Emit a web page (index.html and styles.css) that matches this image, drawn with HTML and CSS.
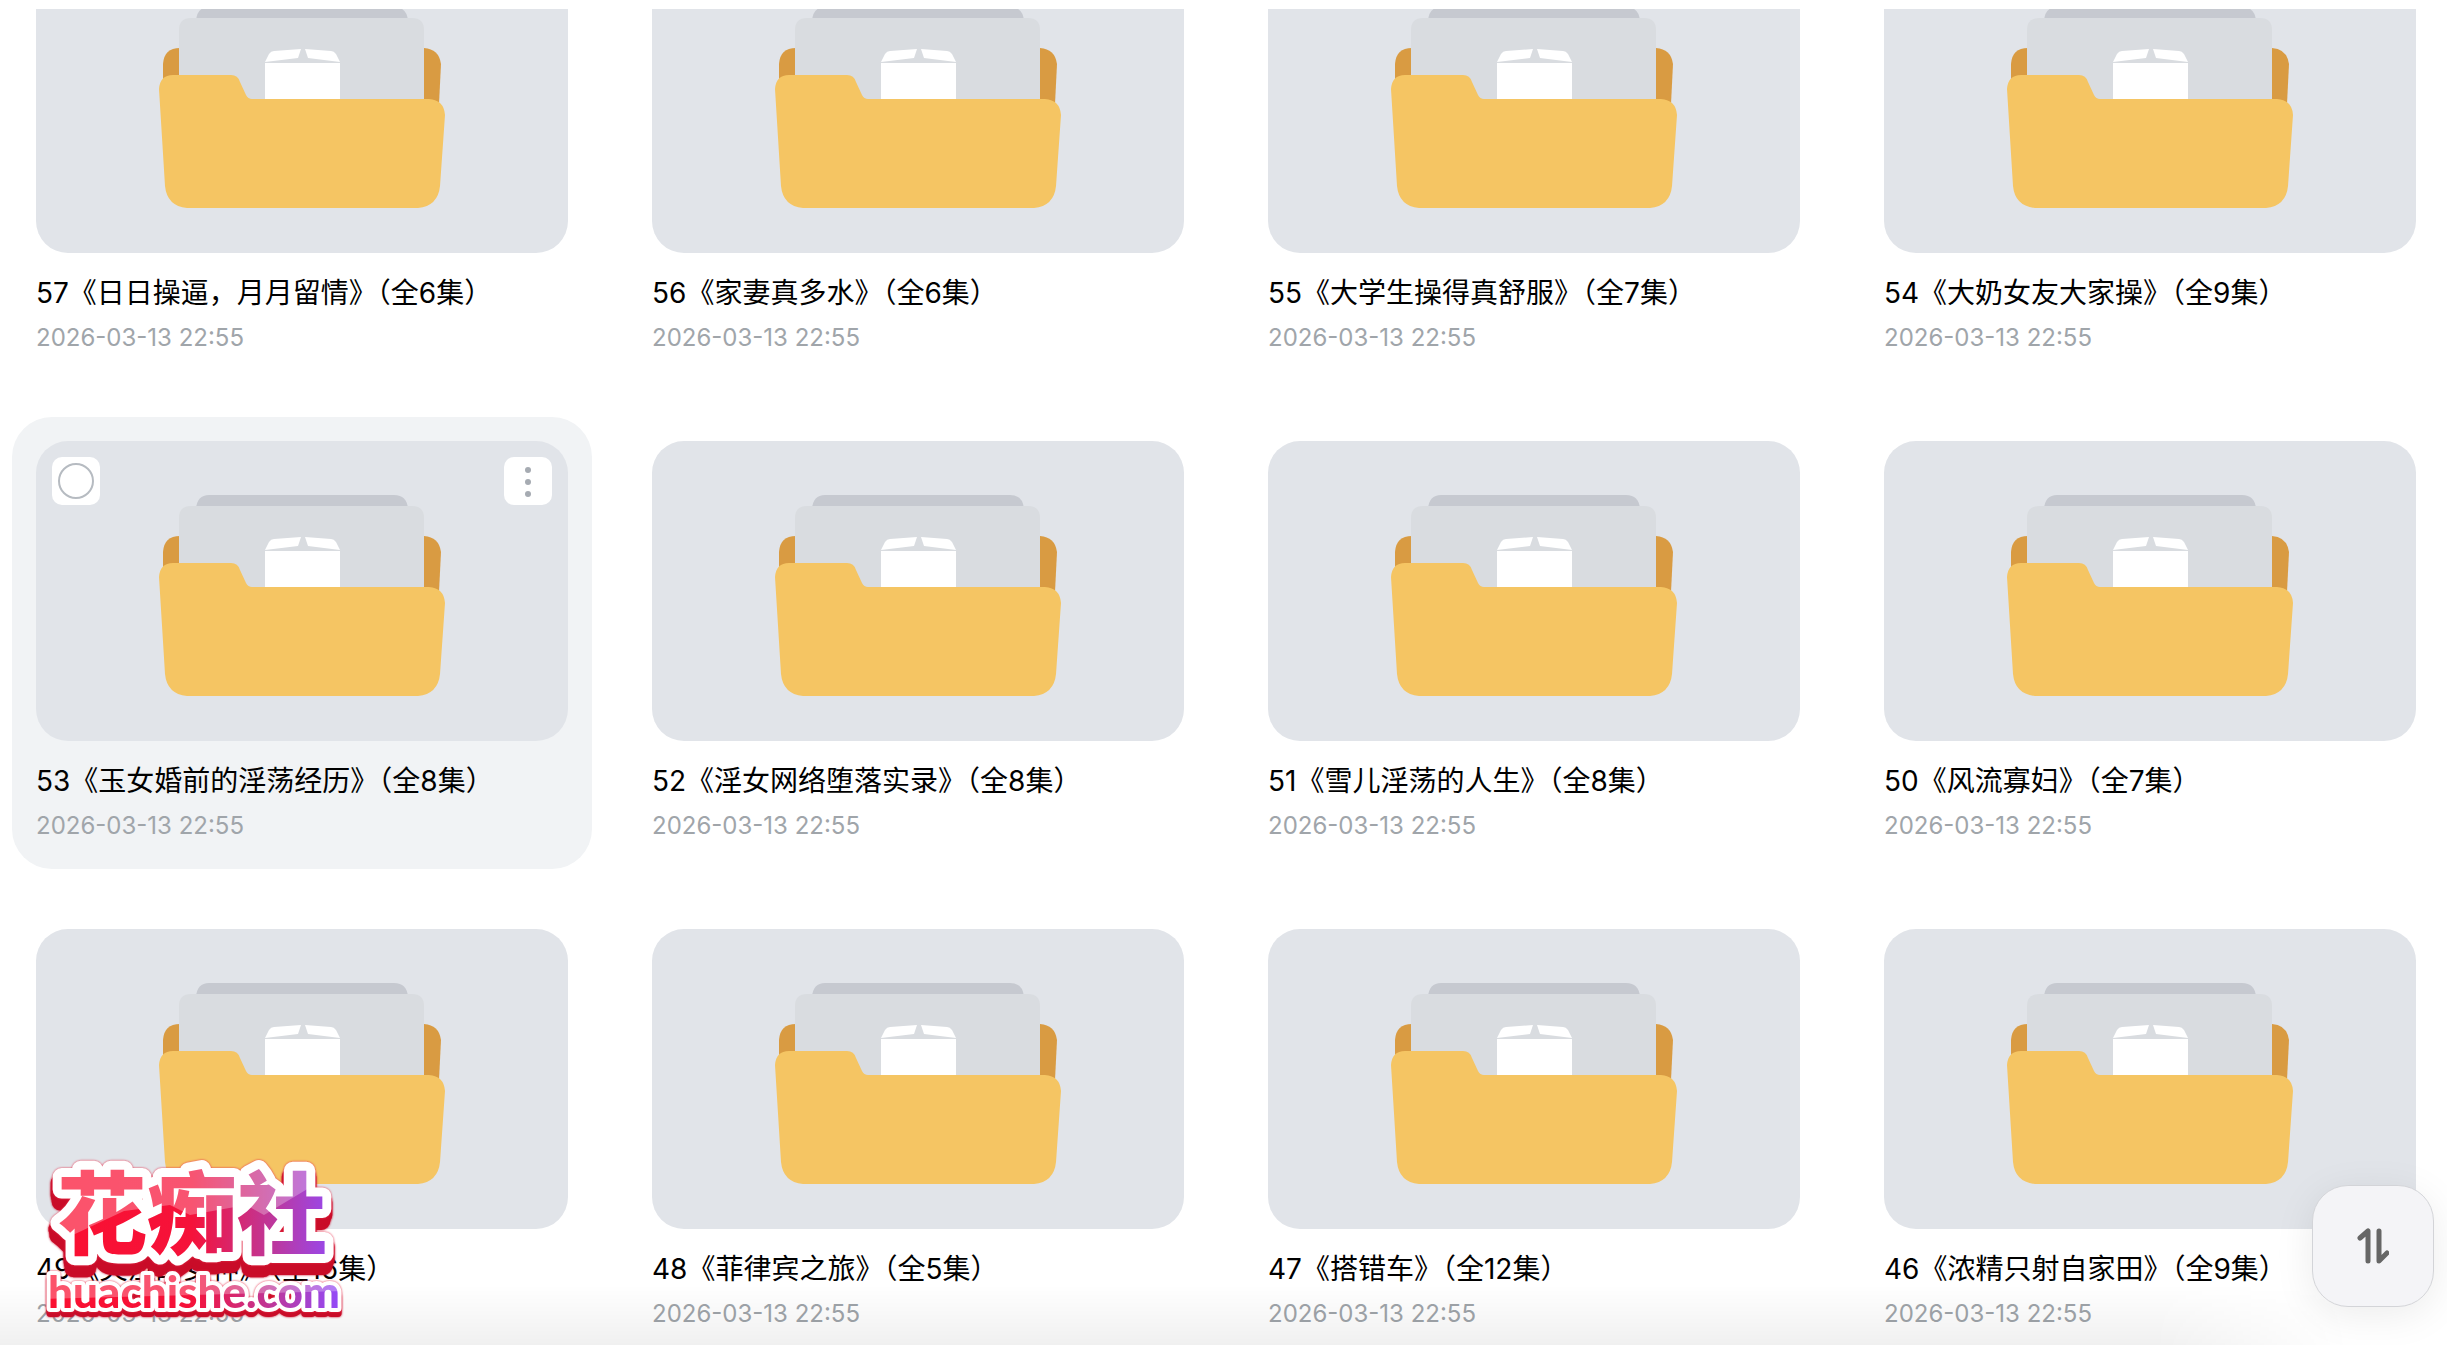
FILE: index.html
```html
<!DOCTYPE html>
<html lang="zh-CN">
<head>
<meta charset="UTF-8">
<title>文件列表</title>
<link rel="stylesheet" href="styles.css">
</head>
<body>
  <!-- 公用的文件夹图标 -->
  <svg class="sprite" aria-hidden="true">
    <symbol id="folder" viewBox="0 0 286 202">
      <path fill="#d99b42" d="M4 70V57q1-16 17-16H265q15 1 17 16l-3 60H7z"/>
      <path fill="#c6c9d0" d="M37 14Q38 0 50 0H235q13 0 14 14z"/>
      <path fill="#d9dce0" d="M20 120V23Q20 11 32 11H253q12 0 12 12v97z"/>
      <path fill="#fff" d="M106 56h75v45h-75z"/>
      <path fill="#fff" d="M106 55l4-8q2-3 5-3l27-2-3 9zM181 55l-4-8q-2-3-5-3l-26-2 3 9z"/>
      <path fill="#f5c563" d="M0 82Q1 68 14 68H72q7 0 9 7l6 13q2 4 6 4H270q15 1 16 16l-5 71q-2 20-22 22H28Q8 199 6 179z"/>
    </symbol>
  </svg>

  <main class="file-view">
    <ul class="file-grid">
      <li class="file-card">
        <div class="thumb"><svg class="folder"><use href="#folder"/></svg></div>
        <div class="file-name">57《日日操逼，月月留情》（全6集）</div>
        <div class="file-time">2026-03-13 22:55</div>
      </li>
      <li class="file-card">
        <div class="thumb"><svg class="folder"><use href="#folder"/></svg></div>
        <div class="file-name">56《家妻真多水》（全6集）</div>
        <div class="file-time">2026-03-13 22:55</div>
      </li>
      <li class="file-card">
        <div class="thumb"><svg class="folder"><use href="#folder"/></svg></div>
        <div class="file-name">55《大学生操得真舒服》（全7集）</div>
        <div class="file-time">2026-03-13 22:55</div>
      </li>
      <li class="file-card">
        <div class="thumb"><svg class="folder"><use href="#folder"/></svg></div>
        <div class="file-name">54《大奶女友大家操》（全9集）</div>
        <div class="file-time">2026-03-13 22:55</div>
      </li>

      <li class="file-card active">
        <div class="thumb">
          <input class="check" type="checkbox" aria-label="选择">
          <button class="more" type="button" aria-label="更多">
            <svg viewBox="0 0 48 48"><circle cx="24" cy="13" r="3"/><circle cx="24" cy="25" r="3"/><circle cx="24" cy="37" r="3"/></svg>
          </button>
          <svg class="folder"><use href="#folder"/></svg>
        </div>
        <div class="file-name">53《玉女婚前的淫荡经历》（全8集）</div>
        <div class="file-time">2026-03-13 22:55</div>
      </li>
      <li class="file-card">
        <div class="thumb"><svg class="folder"><use href="#folder"/></svg></div>
        <div class="file-name">52《淫女网络堕落实录》（全8集）</div>
        <div class="file-time">2026-03-13 22:55</div>
      </li>
      <li class="file-card">
        <div class="thumb"><svg class="folder"><use href="#folder"/></svg></div>
        <div class="file-name">51《雪儿淫荡的人生》（全8集）</div>
        <div class="file-time">2026-03-13 22:55</div>
      </li>
      <li class="file-card">
        <div class="thumb"><svg class="folder"><use href="#folder"/></svg></div>
        <div class="file-name">50《风流寡妇》（全7集）</div>
        <div class="file-time">2026-03-13 22:55</div>
      </li>

      <li class="file-card">
        <div class="thumb"><svg class="folder"><use href="#folder"/></svg></div>
        <div class="file-name">49《哭泣的女神》（全16集）</div>
        <div class="file-time">2026-03-13 22:55</div>
      </li>
      <li class="file-card">
        <div class="thumb"><svg class="folder"><use href="#folder"/></svg></div>
        <div class="file-name">48《菲律宾之旅》（全5集）</div>
        <div class="file-time">2026-03-13 22:55</div>
      </li>
      <li class="file-card">
        <div class="thumb"><svg class="folder"><use href="#folder"/></svg></div>
        <div class="file-name">47《搭错车》（全12集）</div>
        <div class="file-time">2026-03-13 22:55</div>
      </li>
      <li class="file-card">
        <div class="thumb"><svg class="folder"><use href="#folder"/></svg></div>
        <div class="file-name">46《浓精只射自家田》（全9集）</div>
        <div class="file-time">2026-03-13 22:55</div>
      </li>
    </ul>
  </main>

  <div class="bottom-fade"></div>

  <!-- 左下角站点标志 -->
  <svg class="site-logo" viewBox="0 0 304 172" role="img" aria-label="花痴社 huachishe.com">
    <defs>
      <linearGradient id="ink" x1="0" y1="0" x2="1" y2="0">
        <stop offset="0" stop-color="#fb1030"/>
        <stop offset=".5" stop-color="#f5123a"/>
        <stop offset=".75" stop-color="#c03696"/>
        <stop offset="1" stop-color="#8f4cff"/>
      </linearGradient>
      <pattern id="gloss" width="304" height="172" patternUnits="userSpaceOnUse">
        <rect width="304" height="172" fill="url(#ink)"/>
        <path d="M0 0H304L284 26 224 62 206 52 150 62 130 52 84 58 20 88 0 96z" fill="#fff" fill-opacity=".28"/>
        <path d="M0 118H304V138L0 146z" fill="#fff" fill-opacity=".28"/>
      </pattern>
    </defs>
    <text class="logo-name" x="17" y="94">花痴社</text>
    <text class="logo-url" x="8" y="155">huachishe.com</text>
  </svg>

  <button class="sort" type="button" aria-label="排序">
    <svg viewBox="0 0 32 36"><path d="M3 10L11 3V33M22 3V33L30 25"/></svg>
  </button>
</body>
</html>
```
FILE: styles.css
```css
* {
  box-sizing: border-box;
}

body {
  margin: 0;
  background: #fff;
  font-family: Inter, "Noto Sans CJK SC", sans-serif;
}

.sprite {
  display: block;
  width: 0;
  height: 0;
}

.file-view {
  display: flex;
  flex-direction: column;
  justify-content: flex-end;
  height: calc(100vh - 9px);
  margin-top: 9px;
  padding: 0 7px 0 12px;
  overflow: hidden;
}

.file-grid {
  display: grid;
  grid-template-columns: repeat(4, 1fr);
  gap: 36px;
  margin: 0 0 -12px;
  padding: 0;
  list-style: none;
}

.file-card {
  padding: 24px;
  border-radius: 40px;
}

.file-card.active {
  background: #f1f3f5;
}

.thumb {
  position: relative;
  display: flex;
  justify-content: center;
  height: 300px;
  margin-bottom: 20px;
  padding-top: 54px;
  border-radius: 32px;
  background: #e1e4e9;
}

.folder {
  width: 286px;
  height: 202px;
}

.file-name {
  margin-bottom: 8px;
  overflow: hidden;
  color: #000;
  font-size: 28px;
  line-height: 40px;
  white-space: nowrap;
  text-overflow: ellipsis;
}

.file-time {
  padding-bottom: 2px;
  color: #a0a5aa;
  font-size: 24px;
  line-height: 34px;
}

/* 悬停时缩略图上的操作 */
.check,
.more {
  position: absolute;
  top: 16px;
  width: 48px;
  height: 48px;
  margin: 0;
  padding: 0;
  border: 0;
  border-radius: 10px;
  background: #fff;
}

.check {
  left: 16px;
  display: grid;
  place-items: center;
  appearance: none;
}

.check::before {
  content: '';
  width: 32px;
  height: 32px;
  border: 2px solid #b6bbc1;
  border-radius: 50%;
}

.more {
  right: 16px;
}

.more svg {
  display: block;
  fill: #a6abb2;
}

.bottom-fade {
  position: fixed;
  right: 0;
  bottom: 0;
  left: 0;
  height: 60px;
  background: linear-gradient(rgba(0, 0, 0, 0), rgba(0, 0, 0, .06));
  mask-image: linear-gradient(to right, #000 88%, transparent 96%);
}

.site-logo {
  position: fixed;
  bottom: 20px;
  left: 40px;
  width: 304px;
  height: 172px;
  overflow: visible;
}

.logo-name,
.logo-url {
  fill: url(#gloss);
  stroke: #fff;
  stroke-linejoin: round;
  paint-order: stroke;
}

.logo-name {
  font-family: "Noto Sans CJK SC", sans-serif;
  font-size: 90px;
  font-weight: 900;
  stroke-width: 18px;
  filter: drop-shadow(0 0 1px #e8304c) drop-shadow(-2px 6px 0 #c90c28) drop-shadow(1px 6px 0 #c90c28);
}

.logo-url {
  font-family: Lato, sans-serif;
  font-size: 44px;
  font-weight: 900;
  stroke-width: 8px;
  filter: drop-shadow(0 0 1px #e8304c) drop-shadow(0 5px 0 #c90c28);
}

.sort {
  position: fixed;
  right: 13px;
  bottom: 38px;
  display: grid;
  place-items: center;
  width: 122px;
  height: 122px;
  padding: 0;
  border: 1px solid #d3d4d8;
  border-radius: 36px;
  background: #f4f4f7;
  box-shadow: 0 8px 40px rgba(0, 0, 0, .08);
}

.sort svg {
  width: 32px;
  height: 36px;
  fill: none;
  stroke: #666;
  stroke-width: 5;
  stroke-linecap: round;
  stroke-linejoin: round;
}
```
